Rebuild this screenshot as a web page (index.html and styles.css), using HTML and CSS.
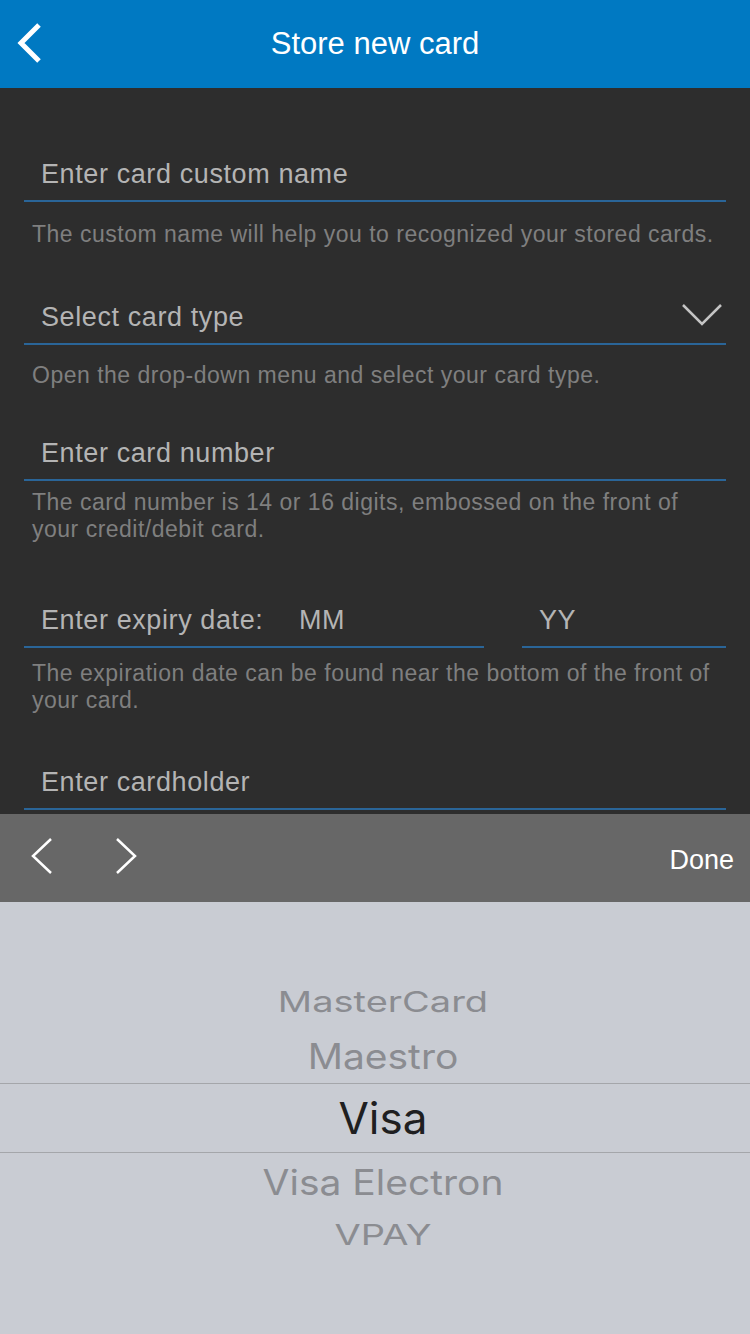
FILE: index.html
```html
<!DOCTYPE html>
<html lang="en">
<head>
    <meta charset="UTF-8">
    <meta name="viewport" content="width=device-width, initial-scale=1.0">
    <title>Store new card</title>
    <link rel="stylesheet" href="styles.css">
</head>
<body>
    <div class="screen">
        <header class="nav-bar">
            <a class="nav-back" href="#">
                <svg width="30" height="44" viewBox="0 0 30 44">
                    <polyline points="25,3 7,21 25,39" fill="none" stroke="#fff" stroke-width="5"/>
                </svg>
            </a>
            <h1>Store new card</h1>
            <span></span>
        </header>

        <div class="form">
            <div class="group">
                <div class="field">Enter card custom name</div>
                <p class="hint hint-1">The custom name will help you to recognized your stored cards.</p>
            </div>

            <div class="group group-2">
                <div class="field">
                    <span>Select card type</span>
                    <svg class="field-arrow" width="44" height="26" viewBox="0 0 44 26">
                        <polyline points="2,3 21,22 40,3" fill="none" stroke="#c4c4c4" stroke-width="2.5"/>
                    </svg>
                </div>
                <p class="hint hint-2">Open the drop-down menu and select your card type.</p>
            </div>

            <div class="group group-3">
                <div class="field">Enter card number</div>
                <p class="hint hint-3">The card number is 14 or 16 digits, embossed on the front of your credit/debit card.</p>
            </div>

            <div class="group group-4">
                <div class="expiry">
                    <div class="field field-month">
                        <span class="expiry-label">Enter expiry date:</span>
                        <span>MM</span>
                    </div>
                    <div class="field field-year">YY</div>
                </div>
                <p class="hint hint-4">The expiration date can be found near the bottom of the front of your card.</p>
            </div>

            <div class="group group-5">
                <div class="field">Enter cardholder</div>
            </div>
        </div>

        <div class="toolbar">
            <div class="toolbar-arrows">
                <svg width="24" height="40" viewBox="0 0 24 40">
                    <polyline points="21,2 3,19 21,36" fill="none" stroke="#fff" stroke-width="2.5"/>
                </svg>
                <svg width="24" height="40" viewBox="0 0 24 40">
                    <polyline points="3,2 21,19 3,36" fill="none" stroke="#fff" stroke-width="2.5"/>
                </svg>
            </div>
            <span class="toolbar-done">Done</span>
        </div>

        <div class="picker">
            <div class="picker-item far">MasterCard</div>
            <div class="picker-item near near-top">Maestro</div>
            <div class="picker-item selected">Visa</div>
            <div class="picker-item near near-bottom">Visa Electron</div>
            <div class="picker-item far far-bottom">VPAY</div>
        </div>
    </div>
</body>
</html>
```

FILE: styles.css
```css
body {
    margin: 0;
    font-family: 'Liberation Sans', Arial, sans-serif;
    background-color: #2d2d2d;
}
.screen {
    width: 750px;
    height: 1334px;
    display: flex;
    flex-direction: column;
    overflow: hidden;
}

/* top bar */
.nav-bar {
    height: 88px;
    flex-shrink: 0;
    background-color: #0079c2;
    display: grid;
    grid-template-columns: 1fr auto 1fr;
    align-items: center;
}
.nav-back {
    display: flex;
    margin-left: 14px;
}
.nav-bar h1 {
    margin: 0;
    color: #fff;
    font-size: 31px;
    font-weight: normal;
    line-height: 88px;
}

/* form */
.form {
    height: 726px;
    flex-shrink: 0;
    overflow: hidden;
    padding: 69px 24px 0;
    box-sizing: border-box;
}
.field {
    display: flex;
    align-items: center;
    padding: 0 0 9px 17px;
    border-bottom: 2px solid #2a6598;
    color: #b4b4b4;
    font-size: 27px;
    line-height: 34px;
    letter-spacing: 0.6px;
}
.field-arrow {
    margin-left: auto;
    margin-right: 1px;
    margin-top: -5px;
}
.hint {
    margin: 0;
    padding-left: 8px;
    color: #7f7f7f;
    font-size: 23px;
    line-height: 27px;
    letter-spacing: 0.5px;
}
.hint-1 { margin-top: 19px; }
.hint-2 { margin-top: 17px; }
.hint-3 { margin-top: 8px; }
.hint-4 { margin-top: 12px; }
.group-2 { margin-top: 52px; }
.group-3 { margin-top: 47px; }
.group-4 { margin-top: 60px; }
.group-5 { margin-top: 51px; }

.expiry {
    display: flex;
    gap: 38px;
}
.field-month {
    flex: 0 0 460px;
    box-sizing: border-box;
}
.expiry-label {
    width: 258px;
}
.field-year {
    flex: 1;
}

/* keyboard toolbar */
.toolbar {
    height: 88px;
    flex-shrink: 0;
    background-color: #676767;
    display: flex;
    align-items: center;
    justify-content: space-between;
    padding: 0 16px 0 30px;
}
.toolbar-arrows {
    display: flex;
    gap: 60px;
    margin-top: -3px;
}
.toolbar-done {
    color: #fff;
    font-size: 27px;
    padding-top: 5px;
}

/* wheel picker */
.picker {
    flex: 1;
    background-color: #c9ccd3;
    padding: 72px 0 0 16px;
    font-family: Inter, 'Noto Sans', sans-serif;
    color: #8b8c91;
}
.picker-item {
    display: flex;
    align-items: center;
    justify-content: center;
    font-size: 39px;
    height: 55px;
}
.far {
    height: 54px;
    font-size: 38px;
    transform: scaleY(0.75);
}
.far-bottom {
    height: 50px;
}
.near {
    transform: scaleY(0.9);
}
.near-bottom {
    height: 56px;
}
.selected {
    height: 68px;
    margin-left: -16px;
    padding-left: 16px;
    border-top: 1px solid #a4a6aa;
    border-bottom: 1px solid #a4a6aa;
    color: #1f1f21;
    font-size: 44px;
}
```
